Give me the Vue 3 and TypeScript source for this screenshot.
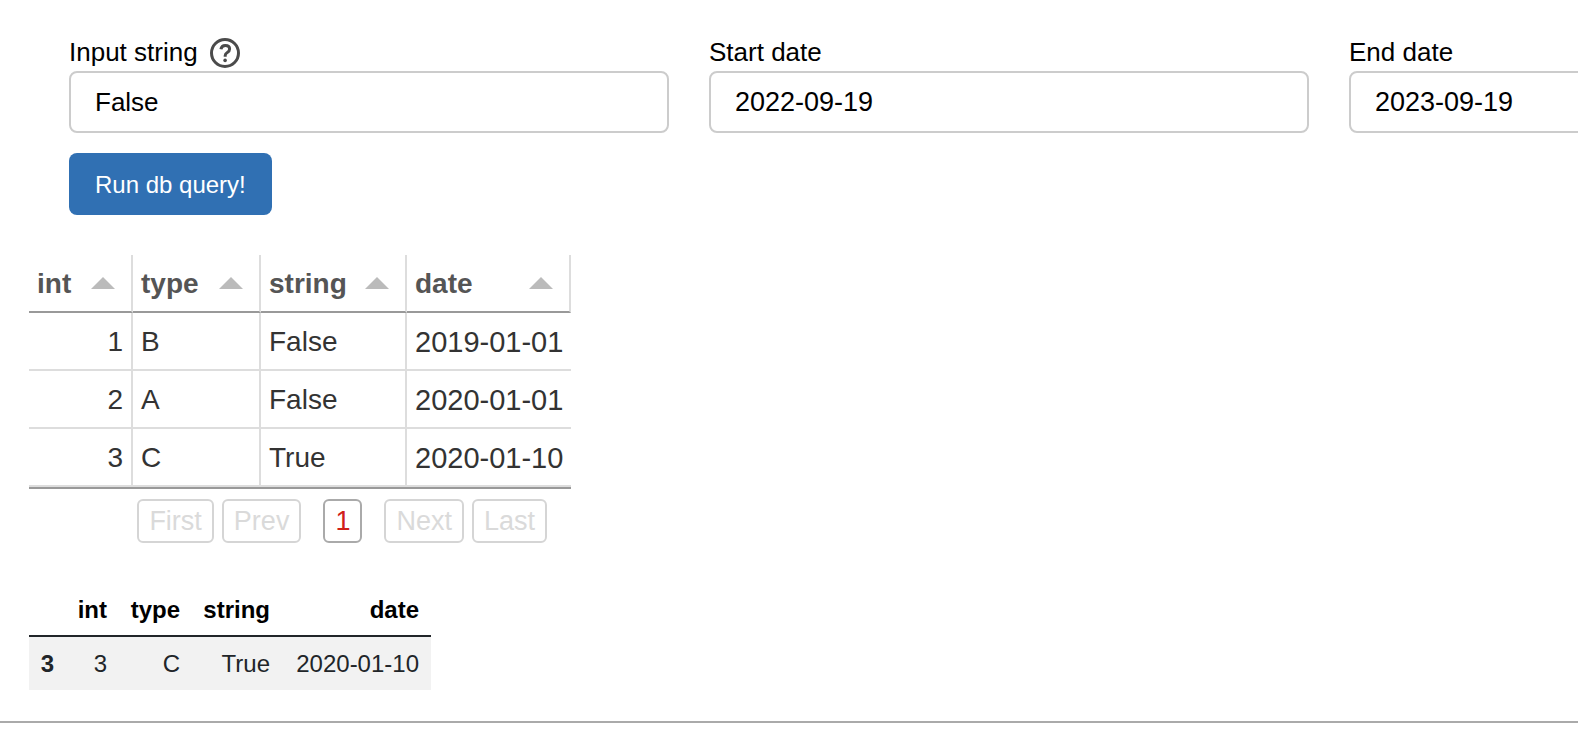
<script setup lang="ts">
import { computed, ref } from 'vue'

interface Row {
  int: number
  type: string
  string: string
  date: string
}
type Field = keyof Row

const text = ref('False')
const startDate = ref('2022-09-19')
const endDate = ref('2023-09-19')

const fields: Field[] = ['int', 'type', 'string', 'date']
const source: Row[] = [
  { int: 1, type: 'B', string: 'False', date: '2019-01-01' },
  { int: 2, type: 'A', string: 'False', date: '2020-01-01' },
  { int: 3, type: 'C', string: 'True', date: '2020-01-10' },
]

const sortField = ref<Field | null>(null)
const rows = computed<Row[]>(() => {
  const field = sortField.value
  if (!field) return source
  return [...source].sort((a, b) => (a[field] > b[field] ? 1 : a[field] < b[field] ? -1 : 0))
})
const selected: Row = source[2]
</script>

<template>
  <main class="page">
    <form class="query" @submit.prevent>
      <div class="fields">
        <div class="field">
          <div class="caption">
            <label for="input-string">Input string</label>
            <svg class="help" viewBox="0 0 30 30" role="img" aria-label="Help">
              <circle cx="15" cy="15" r="13.5" />
              <path d="M10.900 11.300c.4-2.600 2-3.900 4.400-3.900 2.500 0 4.300 1.400 4.300 3.600 0 1.600-.8 2.600-2.300 3.500-1.600 1-2.100 1.700-2.100 3v1.300" />
              <circle class="dot" cx="15.100" cy="22.400" r="1.800" />
            </svg>
          </div>
          <input id="input-string" v-model="text" type="text" />
        </div>
        <div class="field">
          <div class="caption"><label for="start-date">Start date</label></div>
          <input id="start-date" v-model="startDate" class="date" type="text" />
        </div>
        <div class="field">
          <div class="caption"><label for="end-date">End date</label></div>
          <input id="end-date" v-model="endDate" class="date" type="text" />
        </div>
      </div>
      <button class="run" type="submit">Run db query!</button>
    </form>

    <section class="grid">
      <table class="grid-table">
        <thead>
          <tr>
            <th v-for="f in fields" :key="f" :class="'col-' + f" scope="col">
              <button class="sort" type="button" @click="sortField = f">
                <span>{{ f }}</span>
                <svg class="arrow" viewBox="0 0 24 12" aria-hidden="true"><path d="M0 12 12 0l12 12z" /></svg>
              </button>
            </th>
          </tr>
        </thead>
        <tbody>
          <tr v-for="r in rows" :key="r.int">
            <td v-for="f in fields" :key="f" :class="'cell-' + f">{{ r[f] }}</td>
          </tr>
        </tbody>
      </table>
      <nav class="pager" aria-label="Pages">
        <button type="button" disabled>First</button>
        <button type="button" disabled>Prev</button>
        <button class="current" type="button" aria-current="page">1</button>
        <button type="button" disabled>Next</button>
        <button type="button" disabled>Last</button>
      </nav>
    </section>

    <table class="frame">
      <thead>
        <tr>
          <td class="index"></td>
          <th v-for="f in fields" :key="f" :class="'frame-' + f" scope="col">{{ f }}</th>
        </tr>
      </thead>
      <tbody>
        <tr>
          <th scope="row">{{ selected.int }}</th>
          <td v-for="f in fields" :key="f">{{ selected[f] }}</td>
        </tr>
      </tbody>
    </table>
    <hr class="rule" />
  </main>
</template>

<style>
body {
  margin: 0;
  background: #fff;
}
</style>

<style scoped>
.page {
  overflow: hidden;
  padding-top: 33px;
  font-family: "Helvetica Neue", Helvetica, "Liberation Sans", Arial, sans-serif;
  color: #000;
}
.page button,
.page input {
  box-sizing: border-box;
  font-family: inherit;
}
.query {
  padding-left: 69px;
}
.fields {
  display: flex;
  align-items: stretch;
  gap: 40px;
}
.field {
  display: flex;
  flex: 0 0 600px;
  flex-direction: column;
}
.caption {
  display: flex;
  align-items: center;
  gap: 12px;
  height: 38px;
  font-size: 26px;
  line-height: 38px;
}
.help {
  width: 30px;
  height: 30px;
  margin-top: 2px;
  fill: none;
  stroke: #4b4b4b;
  stroke-width: 3;
}
.help .dot {
  fill: #4b4b4b;
  stroke: none;
}
.field input {
  display: block;
  width: 100%;
  height: 62px;
  padding: 0 24px;
  border: 2px solid #ccc;
  border-radius: 8px;
  background: #fff;
  color: #000;
  font-size: 26px;
}
.field input.date {
  font-size: 27px;
}
.run {
  display: block;
  height: 62px;
  margin-top: 20px;
  padding: 2px 26px 0;
  border: 0;
  border-radius: 8px;
  background: #3070b3;
  color: #fff;
  font-size: 24px;
}
.grid {
  width: 542px;
  margin: 40px 0 0 29px;
}
.grid-table {
  width: 100%;
  table-layout: fixed;
  border-collapse: separate;
  border-spacing: 0;
  border-bottom: 2px solid #999;
  color: #333;
  font-size: 28px;
}
.grid-table th,
.grid-table td {
  box-sizing: border-box;
  height: 58px;
  padding: 0;
  border-right: 2px solid #ddd;
  border-bottom: 2px solid #ddd;
  line-height: 32px;
  text-align: left;
}
.grid-table th {
  border-bottom-color: #999;
}
.grid-table td {
  padding: 2px 8px 0;
}
.grid-table .cell-int {
  text-align: right;
}
.grid-table .cell-date {
  padding-right: 0;
  border-right: 0;
  font-size: 29px;
}
.col-int {
  width: 104px;
}
.col-type {
  width: 128px;
}
.col-string {
  width: 146px;
}
.sort {
  display: flex;
  align-items: center;
  justify-content: space-between;
  width: 100%;
  padding: 2px 16px 0 8px;
  border: 0;
  background: none;
  color: #555;
  font-size: 28px;
  font-weight: bold;
  line-height: 32px;
}
.arrow {
  width: 24px;
  height: 12px;
  margin-bottom: 2px;
  fill: #bbb;
}
.pager {
  display: flex;
  justify-content: flex-end;
  gap: 8px;
  padding: 10px 24px 0 0;
}
.pager button {
  height: 44px;
  padding: 0 10px;
  border: 2px solid #d5d5d5;
  border-radius: 6px;
  background: #fff;
  color: #dadada;
  font-size: 27px;
}
.pager .current {
  margin: 0 14px;
  border-color: #aaa;
  color: #d0201a;
}
.frame {
  width: 402px;
  margin: 39px 0 0 29px;
  table-layout: fixed;
  border-collapse: separate;
  border-spacing: 0;
  color: #212529;
  font-size: 24px;
  line-height: 29px;
  text-align: right;
}
.frame th,
.frame td {
  padding: 12px 12px 12px 0;
}
.frame thead th,
.frame thead td {
  border-bottom: 2px solid #212529;
  color: #000;
}
.frame thead th,
.frame thead td {
  padding-bottom: 10px;
}
.frame thead {
  line-height: 31px;
}
.frame tbody tr {
  background: #f2f2f2;
}
.frame .index {
  width: 25px;
}
.frame .frame-int {
  width: 41px;
}
.frame .frame-type {
  width: 61px;
}
.frame .frame-string {
  width: 78px;
}
.rule {
  height: 2px;
  margin: 31px 0 0;
  border: 0;
  background: #aaa;
}
</style>
